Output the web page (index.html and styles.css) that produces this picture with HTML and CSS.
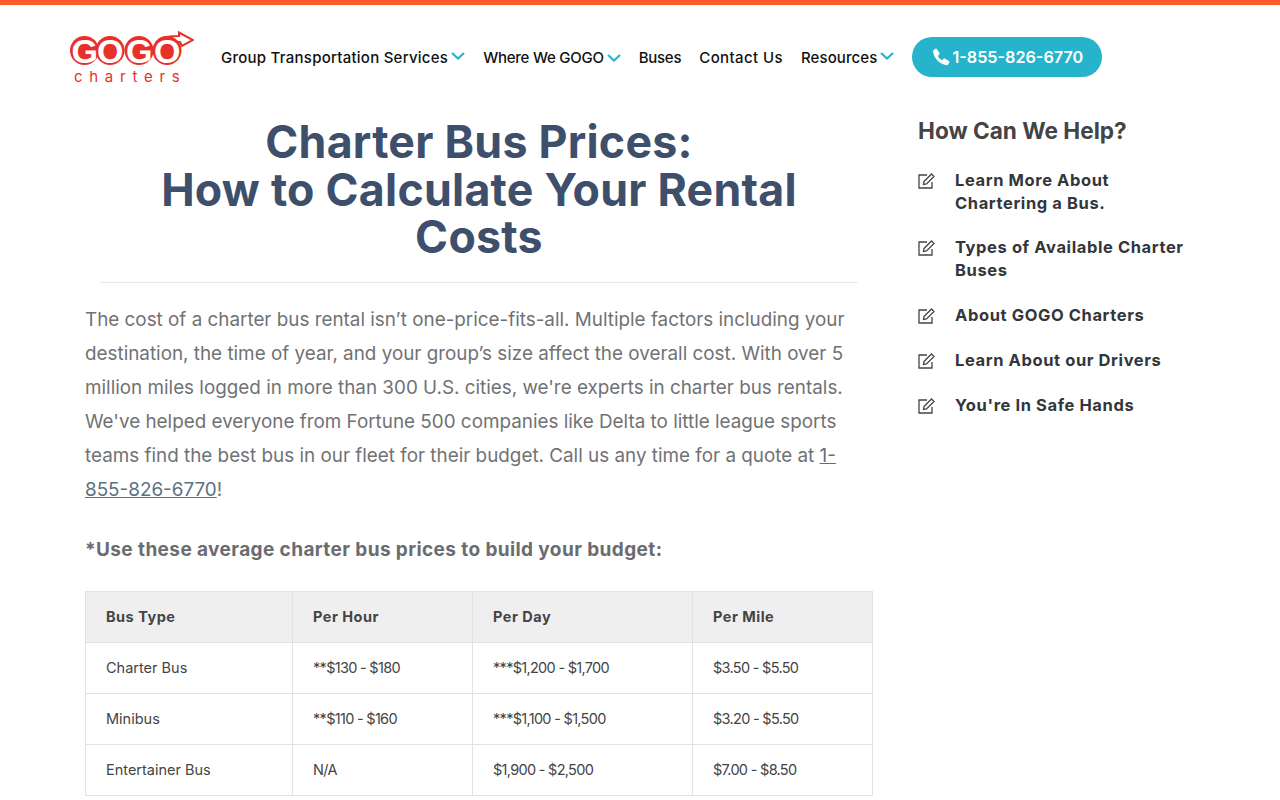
FILE: index.html
```html
<!DOCTYPE html>
<html>
<head>
    <title>Charter Bus Prices - GOGO Charters</title>
    <meta charset="utf-8">
    <link rel="stylesheet" href="styles.css">
</head>
<body>
    <header class="site-header">
        <a href="#" class="logo">
            <svg width="124" height="58" viewBox="0 0 124 58">
                <path class="logo-arrow" d="M88 10 C95 6 102 6 109 6 L109 2.500 L123 10 L112 16 L110 12 L103 12"/>
                <circle cx="14.500" cy="20.500" r="14.500"/>
                <circle cx="40" cy="20.500" r="14.500"/>
                <circle cx="69" cy="20.500" r="14.500"/>
                <circle cx="97" cy="20.500" r="14.500"/>
                <text class="logo-word" x="1.500 27 56 84" y="32.500">GOGO</text>
                <text class="logo-sub" x="4" y="52">charters</text>
            </svg>
        </a>
        <nav class="main-nav">
            <a href="#">Group Transportation Services<svg class="chev" width="14" height="8" viewBox="0 0 14 8"><path d="M1 1l6 5.500 6-5.500"/></svg></a>
            <a href="#" class="nav-where">Where We GOGO<svg class="chev low" width="14" height="8" viewBox="0 0 14 8"><path d="M1 1l6 5.500 6-5.500"/></svg></a>
            <a href="#" class="nav-buses">Buses</a>
            <a href="#" class="nav-contact">Contact Us</a>
            <a href="#" class="nav-resources">Resources<svg class="chev" width="14" height="8" viewBox="0 0 14 8"><path d="M1 1l6 5.500 6-5.500"/></svg></a>
        </nav>
        <a href="#" class="call-btn">
            <svg width="18" height="18" viewBox="0 0 24 24"><path d="M6.600 1.500l3.300 5.300c.4.600.3 1.300-.2 1.800L7.800 10.500c1.200 2.600 3.100 4.500 5.700 5.700l1.900-1.900c.5-.5 1.200-.6 1.800-.2l5.300 3.300c.7.400.9 1.300.5 2l-1.300 2.300c-.5.900-1.500 1.400-2.500 1.300C10.500 21.800 2.200 13.500 1.500 4.800c-.1-1 .4-2 1.300-2.500L4.600 1c.7-.4 1.600-.2 2 .5z"/></svg>
            1-855-826-6770
        </a>
    </header>

    <div class="page">
        <main class="content">
            <h1>Charter Bus Prices:<br>How to Calculate Your Rental Costs</h1>
            <p class="intro">The cost of a charter bus rental isn’t one-price-fits-all. Multiple factors including your destination, the time of year, and your group’s size affect the overall cost. With over 5 million miles logged in more than 300 U.S. cities, we're experts in charter bus rentals. We've helped everyone from Fortune 500 companies like Delta to little league sports teams find the best bus in our fleet for their budget. Call us any time for a quote at <a href="#">1-<br>855-826-6770</a>!</p>
            <p class="note">*Use these average charter bus prices to build your budget:</p>
            <table class="prices">
                <tr><th>Bus Type</th><th>Per Hour</th><th>Per Day</th><th>Per Mile</th></tr>
                <tr><td>Charter Bus</td><td>**$130 - $180</td><td>***$1,200 - $1,700</td><td>$3.50 - $5.50</td></tr>
                <tr><td>Minibus</td><td>**$110 - $160</td><td>***$1,100 - $1,500</td><td>$3.20 - $5.50</td></tr>
                <tr><td>Entertainer Bus</td><td>N/A</td><td>$1,900 - $2,500</td><td>$7.00 - $8.50</td></tr>
            </table>
        </main>
        <aside class="sidebar">
            <h2>How Can We Help?</h2>
            <ul class="help-list">
                <li><svg width="18" height="18" viewBox="0 0 18 18"><path d="M14 10v6H1V3h8M6 9.500L13.500 2 16 4.500 8.500 12 5.500 12.500z"/></svg><a href="#">Learn More About Chartering a Bus.</a></li>
                <li><svg width="18" height="18" viewBox="0 0 18 18"><path d="M14 10v6H1V3h8M6 9.500L13.500 2 16 4.500 8.500 12 5.500 12.500z"/></svg><a href="#">Types of Available Charter Buses</a></li>
                <li><svg width="18" height="18" viewBox="0 0 18 18"><path d="M14 10v6H1V3h8M6 9.500L13.500 2 16 4.500 8.500 12 5.500 12.500z"/></svg><a href="#">About GOGO Charters</a></li>
                <li><svg width="18" height="18" viewBox="0 0 18 18"><path d="M14 10v6H1V3h8M6 9.500L13.500 2 16 4.500 8.500 12 5.500 12.500z"/></svg><a href="#">Learn About our Drivers</a></li>
                <li><svg width="18" height="18" viewBox="0 0 18 18"><path d="M14 10v6H1V3h8M6 9.500L13.500 2 16 4.500 8.500 12 5.500 12.500z"/></svg><a href="#">You're In Safe Hands</a></li>
            </ul>
        </aside>
    </div>
</body>
</html>
```

FILE: styles.css
```css
html, body {
    height: 800px;
    overflow: hidden;
}
body {
    margin: 0;
    font-family: Inter, "Open Sans", sans-serif;
    background: #fff;
    border-top: 5px solid #ff5a2a;
    box-sizing: border-box;
}
a {
    color: inherit;
    text-decoration: none;
}
.site-header {
    display: flex;
    align-items: center;
    height: 104px;
    padding-left: 70px;
}
.logo {
    display: flex;
    width: 124px;
    margin: 4px 27px 0 0;
}
.logo circle {
    fill: #e8302a;
}
.logo-arrow {
    fill: #fff;
    stroke: #e8302a;
    stroke-width: 2;
}
.logo-word {
    font-family: "Liberation Sans", sans-serif;
    font-weight: 700;
    font-size: 34px;
    fill: #fff;
}
.logo-sub {
    font-family: Inter, sans-serif;
    font-size: 15px;
    letter-spacing: 6.700px;
    fill: #e8302a;
}
.main-nav {
    display: flex;
    gap: 18px;
    font-size: 15px;
    font-weight: 500;
    letter-spacing: 0.25px;
    color: #111;
}
.main-nav a {
    display: flex;
    align-items: center;
    white-space: nowrap;
}
.main-nav .nav-where {
    letter-spacing: -0.25px;
}
.main-nav .nav-buses {
    letter-spacing: -0.25px;
}
.main-nav .nav-contact {
    letter-spacing: 0.4px;
}
.main-nav .nav-resources {
    letter-spacing: 0.1px;
}
.chev {
    margin: -3px 0 0 3px;
}
.chev.low {
    margin-top: 1px;
}
.chev path {
    fill: none;
    stroke: #26b4cc;
    stroke-width: 2.200;
}
.call-btn {
    display: flex;
    align-items: center;
    gap: 2px;
    height: 40px;
    margin-left: 18px;
    padding: 0 19px 0 20px;
    border-radius: 20px;
    background: #26b4cc;
    color: #fff;
    font-size: 16.200px;
    font-weight: 600;
    white-space: nowrap;
}
.call-btn svg {
    fill: #fff;
}
.page {
    display: flex;
    padding-left: 85px;
}
.content {
    width: 788px;
}
h1 {
    margin: 10px 15px 0;
    padding-bottom: 20px;
    border-bottom: 1px solid #e8e8e8;
    text-align: center;
    font-size: 44.700px;
    line-height: 47.500px;
    font-weight: 700;
    letter-spacing: 0.25px;
    color: #3e4f6c;
}
.intro {
    margin: 20px 0 0;
    font-size: 18.850px;
    line-height: 34px;
    color: #707274;
}
.intro a {
    color: #5a7180;
    text-decoration: underline;
}
.note {
    margin: 26px 0 0;
    font-size: 19px;
    line-height: 34px;
    font-weight: 700;
    letter-spacing: 0.4px;
    color: #6a6c70;
}
.prices {
    width: 788px;
    margin-top: 24px;
    border-collapse: collapse;
    table-layout: fixed;
    font-size: 14.500px;
    color: #444;
}
.prices th, .prices td {
    height: 50px;
    padding: 0 20px;
    border: 1px solid #e2e2e2;
    text-align: left;
}
.prices th {
    background: #efefef;
    font-weight: 700;
    letter-spacing: 0.5px;
}
.prices td + td {
    letter-spacing: -0.7px;
}
.prices th:nth-child(1) { width: 166px; }
.prices th:nth-child(2) { width: 139px; }
.prices th:nth-child(3) { width: 179px; }
.sidebar {
    width: 280px;
    margin-left: 45px;
    padding-top: 7px;
}
h2 {
    margin: 0;
    font-size: 22.600px;
    line-height: 30px;
    font-weight: 700;
    color: #444;
}
.help-list {
    list-style: none;
    margin: 22.500px 0 0;
    padding: 0;
}
.help-list li {
    display: flex;
    margin-bottom: 21.800px;
    font-size: 16.500px;
    line-height: 23px;
    font-weight: 700;
    letter-spacing: 0.6px;
    color: #33363b;
}
.help-list a {
    max-width: 240px;
}
.help-list svg {
    flex: none;
    margin: 3px 19px 0 0;
    fill: none;
    stroke: #444;
    stroke-width: 1.300;
}
```
